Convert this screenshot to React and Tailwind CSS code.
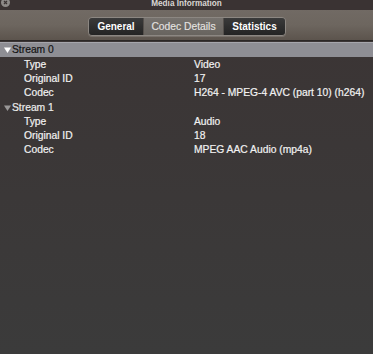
export default function App() {
  const font = { fontFamily: '"Liberation Sans", Arial, sans-serif' };
  const Tri = ({ color }) => (
    <svg width="7" height="6" viewBox="0 0 7 6" className="ml-[4px] mr-[1px]">
      <path d="M0 0.5H7L3.5 6Z" fill={color} />
    </svg>
  );
  const Row = ({ label, value }) => (
    <div className="flex h-[14.2px] items-center text-[10.3px] leading-none text-[#f2f2f2] [-webkit-text-stroke:0.2px_#f2f2f2]">
      <div className="w-[194px] pl-[24px]">{label}</div>
      <div>{value}</div>
    </div>
  );
  return (
    <div className="relative h-[354px] w-[373px] overflow-hidden bg-[#3a3838]" style={font}>
      {/* title bar */}
      <div className="relative flex h-[10px] items-start justify-center bg-[#3a3333]">
        <div className="absolute left-[1px] top-[-2px] flex h-[9px] w-[9px] items-center justify-center rounded-full bg-[#8d8a88]">
          <svg width="5" height="5" viewBox="0 0 5 5">
            <path d="M1 1L4 4M4 1L1 4" stroke="#3a3333" strokeWidth="1.2" />
          </svg>
        </div>
        <div className="mt-[-1px] text-[8.2px] font-bold leading-[9px] text-[#d9d6d4]">Media Information</div>
      </div>
      {/* toolbar */}
      <div className="flex h-[30px] items-start justify-center bg-gradient-to-b from-[#716a64] via-[#6d665f] to-[#5c544d] pt-[7px]">
        <div className="ml-[1px] flex h-[19px] overflow-hidden rounded-[4px] border border-[#8c8782] shadow-[0_1px_0_rgba(255,255,255,0.15)]">
          <div className="flex w-[54px] items-center justify-center bg-gradient-to-b from-[#3a3a3a] to-[#242424] text-[10px] font-bold text-white">General</div>
          <div className="flex w-[81px] items-center justify-center border-x border-[#55504c] bg-gradient-to-b from-[#76726e] to-[#68645f] text-[10.3px] text-[#e4e2e0] [-webkit-text-stroke:0.15px_#e4e2e0]">Codec Details</div>
          <div className="flex w-[61px] items-center justify-center bg-gradient-to-b from-[#3a3a3a] to-[#242424] text-[10px] font-bold text-white">Statistics</div>
        </div>
      </div>
      <div className="h-[1px] bg-[#2b2726]" />
      {/* content */}
      <div className="h-[313px] bg-gradient-to-b from-[#3b3535] to-[#3b3b3b] pt-[1px]">
        <div className="flex h-[14.5px] items-center border-t border-[#a6a6ac] bg-[#8e8e94] pt-[1px] text-[10.3px] leading-none text-[#141414] [-webkit-text-stroke:0.2px_#141414]">
          <Tri color="#ffffff" />Stream 0
        </div>
        <div className="pt-[1.5px]">
          <Row label="Type" value="Video" />
          <Row label="Original ID" value="17" />
          <Row label="Codec" value="H264 - MPEG-4 AVC (part 10) (h264)" />
          <div className="flex h-[14.2px] items-center text-[10.3px] leading-none text-[#ececec] [-webkit-text-stroke:0.2px_#ececec]">
            <Tri color="#9a9898" />Stream 1
          </div>
          <Row label="Type" value="Audio" />
          <Row label="Original ID" value="18" />
          <Row label="Codec" value="MPEG AAC Audio (mp4a)" />
        </div>
      </div>
    </div>
  );
}
